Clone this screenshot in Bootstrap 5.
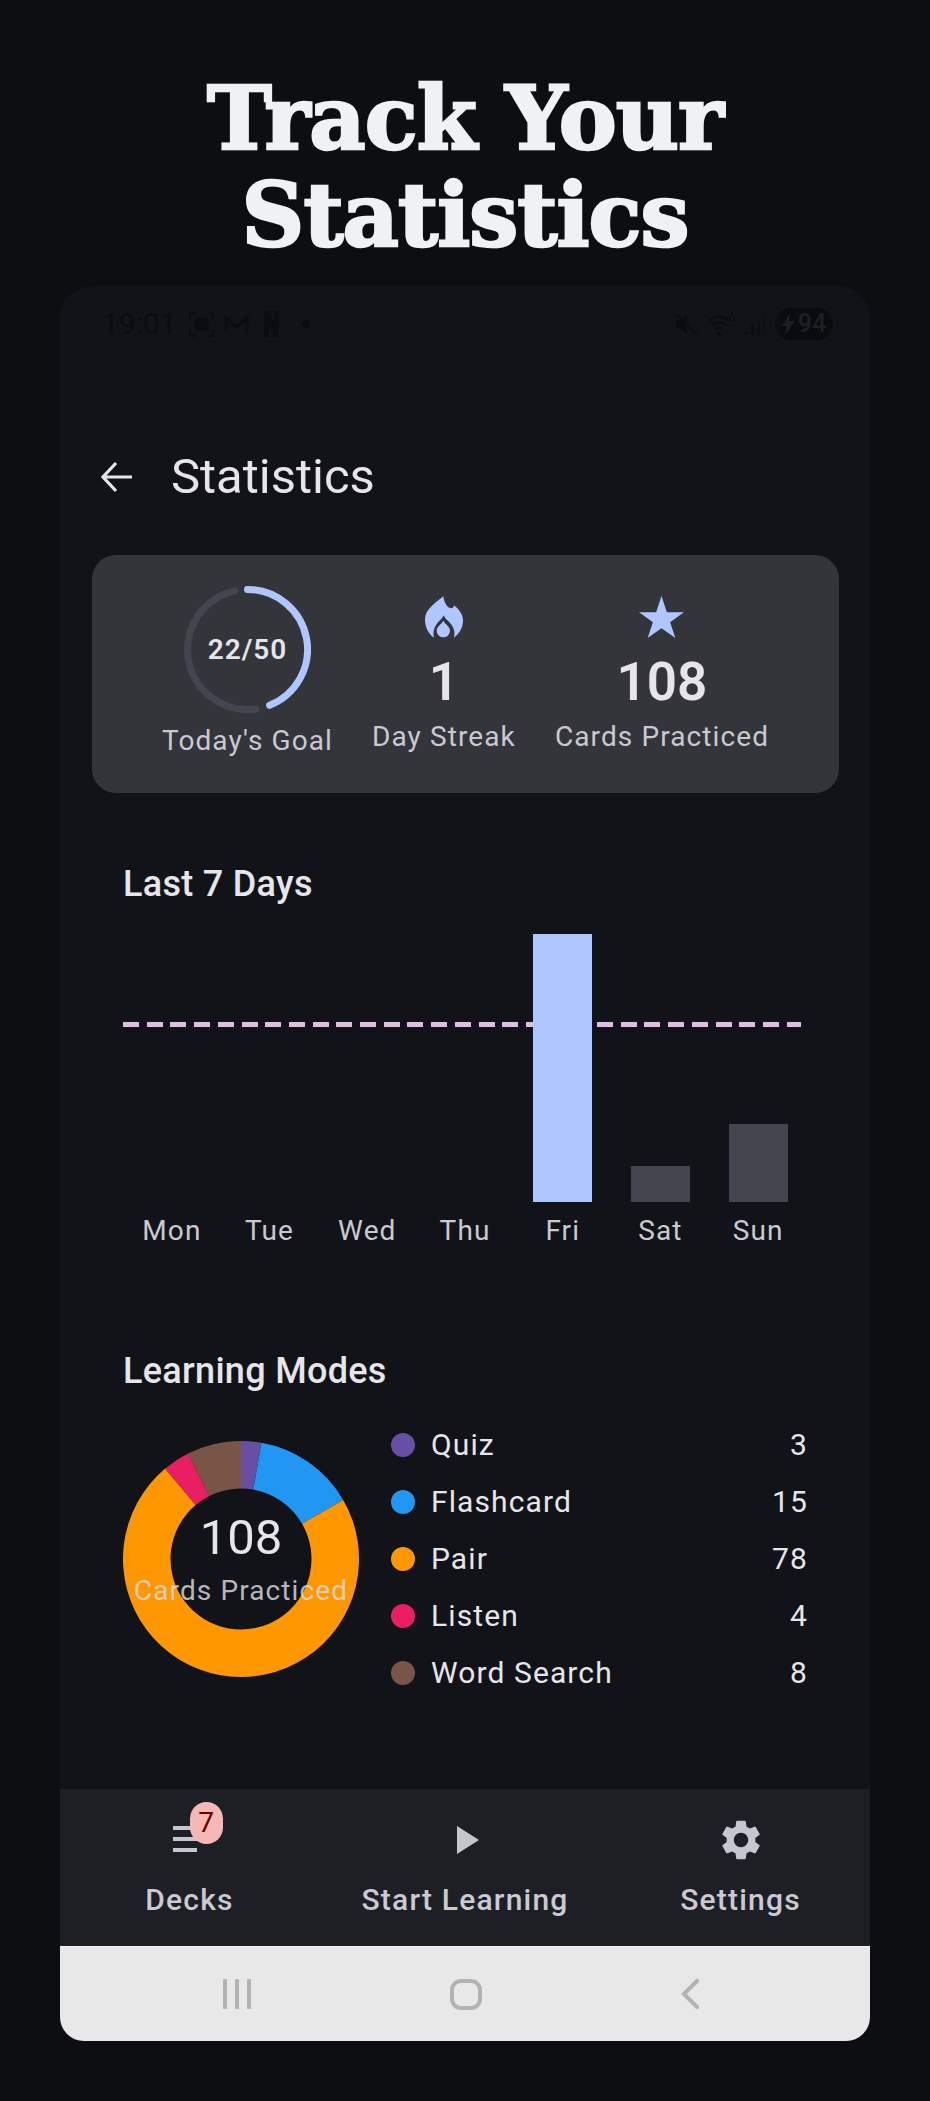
<!DOCTYPE html>
<html lang="en">
<head>
  <meta charset="UTF-8">
  <title>Track Your Statistics</title>
  <link href="https://cdn.jsdelivr.net/npm/bootstrap@5.3.3/dist/css/bootstrap.min.css" rel="stylesheet">
  <style>
    html, body {
      margin: 0;
      background-color: #0d0e12;
    }
    body {
      width: 930px;
      height: 2101px;
      overflow: hidden;
      font-family: Roboto, sans-serif;
      color: #e2e2e9;
    }
    .promo-head {
      height: 286px;
      padding-top: 70px;
      margin: 0;
      text-align: center;
      font-family: "DejaVu Serif", serif;
      font-weight: 700;
      font-size: 87px;
      line-height: 97px;
      letter-spacing: -1px;
      color: #f0f1f5;
      -webkit-text-stroke: 2.5px #f0f1f5;
    }
    .phone {
      width: 810px;
      height: 1755px;
      margin-left: 60px;
      background-color: #111318;
      border-radius: 32px 32px 24px 24px;
      overflow: hidden;
    }
    .status-row {
      height: 32px;
      margin-top: 22px;
      padding: 0 37px 0 42px;
      color: #0b0c10;
      font-size: 30px;
      line-height: 32px;
    }
    .st-frame { margin-left: 12px; }
    .st-mail { margin-left: 10px; }
    .st-news { margin-left: 15px; }
    .st-dot { margin-left: 23px; }
    .st-wifi { margin-left: 11px; }
    .st-bars { margin-left: 10px; }
    .batt-pill {
      width: 58px;
      height: 32px;
      margin-left: 10px;
      gap: 3px;
      border-radius: 16px;
      background-color: #0a0b0e;
      color: #1e1f24;
      font-size: 25px;
      font-weight: 500;
    }
    .top-row {
      height: 60px;
      margin-top: 107px;
      padding-left: 41px;
    }
    .top-title {
      margin-left: 38px;
      font-size: 49px;
      line-height: 60px;
      font-weight: 400;
      color: #e6e6ea;
    }
    .summary-box {
      width: 747px;
      height: 238px;
      margin: 48px 0 0 32px;
      gap: 39px;
      background-color: #34353b;
      border-radius: 24px;
    }
    .ring-wrap {
      width: 127px;
      height: 127px;
      margin-bottom: 7px;
    }
    .ring-text {
      font-size: 28px;
      font-weight: 600;
      letter-spacing: 1px;
      color: #e6e6ea;
    }
    .stat-icon {
      height: 42px;
      margin-bottom: 14px;
    }
    .stat-num {
      font-size: 53px;
      line-height: 60px;
      font-weight: 600;
      color: #e6e6ea;
      margin-bottom: 10px;
    }
    .stat-label {
      font-size: 28px;
      line-height: 30px;
      letter-spacing: 1.1px;
      color: #c8c9d2;
      white-space: nowrap;
    }
    .goal-label {
      line-height: 42px;
    }
    .section-title {
      padding-left: 63px;
      font-size: 36px;
      line-height: 40px;
      font-weight: 500;
      letter-spacing: .3px;
      color: #e6e6ea;
      margin-bottom: 0;
    }
    .title-week { margin-top: 71px; }
    .title-modes { margin-top: 102px; }
    .week-chart {
      width: 684px;
      margin: 30px 0 0 63px;
    }
    .plot {
      height: 268px;
    }
    .goal-line {
      left: 0;
      top: 88px;
      width: 678px;
      height: 5px;
      background: repeating-linear-gradient(90deg, #dfbfe2 0, #dfbfe2 16px, transparent 16px, transparent 23.7px);
    }
    .day-col {
      flex: 1 1 0;
      z-index: 1;
    }
    .day-bar {
      width: 59px;
    }
    .bar-hot {
      background-color: #b0c6ff;
    }
    .bar-low {
      background-color: #44464f;
    }
    .day-name {
      flex: 1 1 0;
      margin-top: 11px;
      text-align: center;
      font-size: 28px;
      line-height: 36px;
      letter-spacing: 1.1px;
      color: #c8c9d2;
    }
    .modes-block {
      margin: 25px 0 0 63px;
      gap: 32px;
    }
    .donut {
      width: 236px;
      height: 236px;
    }
    .donut-text {
      top: 67px;
      left: 0;
      width: 236px;
    }
    .donut-num {
      font-size: 49px;
      line-height: 60px;
      color: #e6e6ea;
    }
    .donut-label {
      margin-top: 5px;
      font-size: 28px;
      line-height: 36px;
      letter-spacing: 1.1px;
      color: rgba(214, 214, 220, .85);
      white-space: nowrap;
    }
    .mode-list {
      width: 417px;
    }
    .mode-row {
      height: 57px;
      font-size: 30px;
      letter-spacing: 1.1px;
      color: #e6e6ea;
    }
    .mode-dot {
      width: 24px;
      height: 24px;
      border-radius: 50%;
      margin-right: 16px;
    }
    .bottom-nav {
      height: 157px;
      margin-top: auto;
      padding-top: 27px;
      background-color: #1e1f25;
      color: #c5c6d0;
    }
    .nav-a { width: 259px; }
    .nav-b { width: 292px; }
    .nav-c { width: 259px; }
    .nav-icon {
      width: 48px;
      height: 48px;
    }
    .nav-text {
      margin-top: 16px;
      font-size: 30px;
      line-height: 40px;
      font-weight: 500;
      letter-spacing: 1.2px;
      color: #c9cad3;
      white-space: nowrap;
    }
    .deck-count {
      left: 24px;
      top: -14px;
      width: 33px;
      height: 42px;
      border-radius: 17px;
      background-color: #f4b8b5;
      color: #690005;
      font-size: 28px;
    }
    .gesture-bar {
      height: 95px;
      gap: 199px;
      padding-right: 7px;
      background-color: #e8e8e8;
      border-top: 1px solid #f6f6f6;
    }
  </style>
</head>
<body>

<h1 class="promo-head">Track Your<br>Statistics</h1>

<div class="phone d-flex flex-column">

  <!-- Status bar, nearly invisible on the dark surface -->
  <div class="status-row d-flex align-items-center">
    <span>19:01</span>
    <svg class="st-frame" width="25" height="25" viewBox="0 0 25 25" fill="none" stroke="currentColor" stroke-width="2"><path d="M1 7V3a2 2 0 0 1 2-2h4M18 1h4a2 2 0 0 1 2 2v4M24 18v4a2 2 0 0 1-2 2h-4M7 24H3a2 2 0 0 1-2-2v-4"/><rect x="6.500" y="7" width="12" height="11" rx="2" fill="currentColor"/></svg>
    <svg class="st-mail" width="25" height="18" viewBox="0 0 25 18" fill="none" stroke="currentColor" stroke-width="3"><path d="M2 17V3l10.500 9L23 3v14"/></svg>
    <svg class="st-news" width="15" height="26" viewBox="0 0 15 26" fill="currentColor"><path d="M0 0h5l5 12V0h5v26h-5L5 14v12H0z"/></svg>
    <svg class="st-dot" width="8" height="8" viewBox="0 0 8 8" fill="currentColor"><circle cx="4" cy="4" r="4"/></svg>

    <svg class="ms-auto" width="23" height="22" viewBox="0 0 23 22" fill="currentColor"><path d="M1 7h5l6-6v20l-6-6H1zM2 1l21 20-2 1L1 3z"/></svg>
    <svg class="st-wifi" width="26" height="26" viewBox="0 0 26 26" fill="none" stroke="currentColor" stroke-width="2.500"><path d="M0 10c6-6 14-6 20 0M3 14c4-4 10-4 14 0M6 18c3-2 5-2 8 0"/><circle cx="10" cy="23" r="2" fill="currentColor" stroke="none"/><path d="M24 2c-2 1-3 3-3 5a2 2 0 1 0 3 -1" stroke-width="1.500"/></svg>
    <svg class="st-bars" width="20" height="22" viewBox="0 0 20 22" fill="currentColor"><rect x="0" y="18" width="3" height="4"/><rect x="6" y="12" width="3" height="10"/><rect x="12" y="6" width="3" height="16" opacity=".7"/><rect x="18" y="0" width="2" height="22" opacity=".5"/></svg>
    <div class="batt-pill d-flex align-items-center justify-content-center">
      <svg width="13" height="22" viewBox="0 0 13 22" fill="currentColor"><path d="M8 0L0 13h5l-2 9 10-14H7z"/></svg>
      <span>94</span>
    </div>
  </div>

  <!-- Toolbar -->
  <div class="top-row d-flex align-items-center">
    <svg width="32" height="32" viewBox="0 0 32 32" fill="none" stroke="#e6e6ea" stroke-width="3.200"><path d="M31 16H3M15 2L2 16l13 14"/></svg>
    <h2 class="top-title mb-0">Statistics</h2>
  </div>

  <!-- Summary -->
  <div class="summary-box d-flex align-items-center justify-content-center">
    <div class="d-flex flex-column align-items-center">
      <div class="ring-wrap position-relative d-flex align-items-center justify-content-center">
        <svg class="position-absolute top-0 start-0" width="127" height="127" viewBox="0 0 127 127" fill="none" stroke-width="7" stroke-linecap="round">
          <path d="M71.800 122.900A60 60 0 0 1 51 4.800" stroke="#44464f"/>
          <path d="M63.500 3.500A60 60 0 0 1 85.600 119.300" stroke="#b0c6ff"/>
        </svg>
        <span class="ring-text">22/50</span>
      </div>
      <div class="stat-label goal-label">Today's Goal</div>
    </div>
    <div class="d-flex flex-column align-items-center">
      <svg class="stat-icon" width="38" height="42" viewBox="0 0 114 124" fill="#b0c6ff"><path d="M55 0C57 15 65 35 78 36C84 36 87 30 87 27C103 40 114 55 114 72C114 95 103 112 87 124C92 105 85 88 67 72C60 65 57 60 57 57C55 60 50 67 45 72C30 85 22 105 27 124C10 112 0 92 0 70C0 40 28 22 55 0Z"/><path d="M55 73C62 85 75 90 75 103A20 20 0 1 1 35 103C35 90 48 85 55 73Z"/></svg>
      <div class="stat-num">1</div>
      <div class="stat-label">Day Streak</div>
    </div>
    <div class="d-flex flex-column align-items-center">
      <svg class="stat-icon" width="47" height="42" viewBox="0 0 47 44" fill="#b0c6ff"><path d="M23.500 0l5.600 17H47L32.500 27.500 38 44 23.500 33.800 9 44l5.500-16.500L0 17h17.900z"/></svg>
      <div class="stat-num">108</div>
      <div class="stat-label">Cards Practiced</div>
    </div>
  </div>

  <!-- Last 7 days -->
  <h3 class="section-title title-week">Last 7 Days</h3>
  <div class="week-chart">
    <div class="plot d-flex align-items-end position-relative">
      <div class="goal-line position-absolute"></div>
      <div class="day-col d-flex justify-content-center"></div>
      <div class="day-col d-flex justify-content-center"></div>
      <div class="day-col d-flex justify-content-center"></div>
      <div class="day-col d-flex justify-content-center"></div>
      <div class="day-col d-flex justify-content-center"><div class="day-bar bar-hot" style="height:268px"></div></div>
      <div class="day-col d-flex justify-content-center"><div class="day-bar bar-low" style="height:36px"></div></div>
      <div class="day-col d-flex justify-content-center"><div class="day-bar bar-low" style="height:78px"></div></div>
    </div>
    <div class="d-flex">
      <div class="day-name">Mon</div>
      <div class="day-name">Tue</div>
      <div class="day-name">Wed</div>
      <div class="day-name">Thu</div>
      <div class="day-name">Fri</div>
      <div class="day-name">Sat</div>
      <div class="day-name">Sun</div>
    </div>
  </div>

  <!-- Learning modes -->
  <h3 class="section-title title-modes">Learning Modes</h3>
  <div class="modes-block d-flex align-items-center">
    <div class="donut position-relative">
      <svg id="donutChart" width="236" height="236" viewBox="0 0 236 236"></svg>
      <div class="donut-text position-absolute d-flex flex-column align-items-center">
        <div class="donut-num">108</div>
        <div class="donut-label">Cards Practiced</div>
      </div>
    </div>
    <div class="mode-list" id="modeList"></div>
  </div>

  <!-- Bottom navigation -->
  <div class="bottom-nav d-flex">
    <div class="nav-a d-flex flex-column align-items-center">
      <div class="nav-icon position-relative">
        <svg width="48" height="48" viewBox="0 0 24 24" fill="#c5c6d0"><path d="M3.500 5h18v2h-18zM3.500 10.500h15v2h-15zM3.500 16h12v2h-12z"/></svg>
        <div class="deck-count position-absolute d-flex align-items-center justify-content-center">7</div>
      </div>
      <div class="nav-text">Decks</div>
    </div>
    <div class="nav-b d-flex flex-column align-items-center">
      <div class="nav-icon">
        <svg width="48" height="48" viewBox="0 0 24 24" fill="#c5c6d0"><path d="M8 5v14l11-7z"/></svg>
      </div>
      <div class="nav-text">Start Learning</div>
    </div>
    <div class="nav-c d-flex flex-column align-items-center">
      <div class="nav-icon">
        <svg width="48" height="48" viewBox="0 0 24 24" fill="#c5c6d0"><path d="M19.140 12.940c.04-.3.06-.61.06-.94 0-.32-.02-.64-.07-.94l2.030-1.580c.18-.14.23-.41.12-.61l-1.920-3.320c-.12-.22-.37-.29-.59-.22l-2.390.96c-.5-.38-1.030-.7-1.620-.94l-.36-2.540c-.04-.24-.24-.41-.48-.41h-3.840c-.24 0-.43.17-.47.41l-.36 2.540c-.59.24-1.130.57-1.620.94l-2.390-.96c-.22-.08-.47 0-.59.22L2.740 8.870c-.12.21-.08.47.12.61l2.030 1.580c-.05.3-.09.63-.09.94s.02.64.07.94l-2.030 1.580c-.18.14-.23.41-.12.61l1.920 3.320c.12.22.37.29.59.22l2.390-.96c.5.38 1.030.7 1.620.94l.36 2.540c.05.24.24.41.48.41h3.840c.24 0 .44-.17.47-.41l.36-2.540c.59-.24 1.130-.56 1.620-.94l2.390.96c.22.08.47 0 .59-.22l1.920-3.320c.12-.22.07-.47-.12-.61l-2.010-1.580zM12 15.600c-1.980 0-3.600-1.620-3.600-3.600s1.620-3.600 3.600-3.600 3.600 1.620 3.600 3.600-1.620 3.600-3.600 3.600z"/></svg>
      </div>
      <div class="nav-text">Settings</div>
    </div>
  </div>

  <!-- System navigation -->
  <div class="gesture-bar d-flex align-items-center justify-content-center">
    <svg width="28" height="30" viewBox="0 0 28 30" fill="#b2b2b2"><rect x="0" width="4" height="30" rx="1"/><rect x="12" width="4" height="30" rx="1"/><rect x="24" width="4" height="30" rx="1"/></svg>
    <svg width="32" height="31" viewBox="0 0 32 31" fill="none" stroke="#b2b2b2" stroke-width="4"><rect x="2" y="2" width="28" height="27" rx="9"/></svg>
    <svg width="19" height="30" viewBox="0 0 19 30" fill="none" stroke="#b2b2b2" stroke-width="4" stroke-linecap="round"><path d="M16 2L3 15l13 13"/></svg>
  </div>
</div>

<script>
  const modes = [
    { name: 'Quiz', count: 3, color: '#6750a4' },
    { name: 'Flashcard', count: 15, color: '#2196f3' },
    { name: 'Pair', count: 78, color: '#ff9800' },
    { name: 'Listen', count: 4, color: '#e91e63' },
    { name: 'Word Search', count: 8, color: '#795548' }
  ];
  const total = modes.reduce((sum, m) => sum + m.count, 0);

  const point = (r, turn) => {
    const a = turn * 2 * Math.PI;
    return `${(118 + r * Math.sin(a)).toFixed(2)} ${(118 - r * Math.cos(a)).toFixed(2)}`;
  };

  let done = 0;
  let slices = '';
  modes.forEach(m => {
    const from = done / total;
    done += m.count;
    const to = done / total;
    const big = to - from > 0.5 ? 1 : 0;
    slices += `<path fill="${m.color}" d="M${point(118, from)}A118 118 0 ${big} 1 ${point(118, to)}L${point(70.5, to)}A70.5 70.5 0 ${big} 0 ${point(70.5, from)}Z"/>`;
  });
  document.getElementById('donutChart').innerHTML = slices;

  document.getElementById('modeList').innerHTML = modes.map(m => `
    <div class="mode-row d-flex align-items-center">
      <span class="mode-dot" style="background-color:${m.color}"></span>
      <span>${m.name}</span>
      <span class="ms-auto">${m.count}</span>
    </div>`).join('');
</script>

<script src="https://cdn.jsdelivr.net/npm/bootstrap@5.3.3/dist/js/bootstrap.bundle.min.js"></script>
</body>
</html>
